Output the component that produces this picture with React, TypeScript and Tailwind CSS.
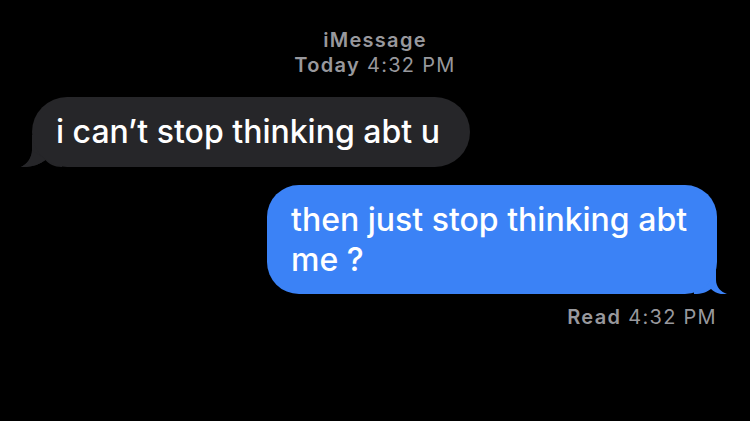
import React from "react";

export default function App() {
  const font = { fontFamily: "Inter, 'Noto Sans', sans-serif" };
  return (
    <div
      className="w-[750px] h-[421px] bg-black flex flex-col overflow-hidden"
      style={font}
    >
      <div className="pt-[28px] text-center text-[20px] leading-[25px] tracking-[1.3px] text-[#98989d]">
        <div className="font-semibold">iMessage</div>
        <div>
          <span className="font-semibold">Today</span> 4:32 PM
        </div>
      </div>

      <div className="mt-[19px] ml-[32px] relative w-[438px]">
        <svg
          className="absolute left-[-11px] bottom-0"
          width="41"
          height="32"
          viewBox="21 135 41 32"
        >
          <path
            d="M32 135 L32 150 C32 158 27 164 21 167 C30 167.5 39 165 45.5 160 C49 164 54 167 62 167 L62 135 Z"
            fill="#262629"
          />
        </svg>
        <div className="relative h-[70px] rounded-[35px] bg-[#262629] pl-[24px] text-white text-[32px] leading-[70px] font-medium">
          i can’t stop thinking abt u
        </div>
        <svg
          className="absolute left-[-11px] bottom-0 pointer-events-none"
          width="41"
          height="32"
          viewBox="21 135 41 32"
        >
          <path
            d="M32 150 C32 158 27 164 21 167 C30 167.5 39 165 45.5 160 C42 156 34 152 32 150 Z"
            fill="#262629"
          />
        </svg>
      </div>

      <div className="mt-[18px] mr-[33px] self-end relative w-[450px]">
        <svg
          className="absolute right-[-11px] bottom-0"
          width="34"
          height="34"
          viewBox="695 260 34 34"
        >
          <path
            d="M717 260 L717 280 C717 287 722 292 728 294 C722 295 716 293 712 289 C708 292 703 294 695 294 L695 260 Z"
            fill="#3b82f6"
          />
        </svg>
        <div className="relative h-[109px] rounded-[32px] bg-[#3b82f6] pl-[24px] pt-[15px] text-white text-[32px] leading-[40px] font-medium">
          then just stop thinking abt
          <br />
          me ?
        </div>
      </div>

      <div className="mt-[11px] mr-[33px] text-right text-[20px] leading-[25px] tracking-[1.3px] text-[#98989d]">
        <span className="font-semibold">Read</span> 4:32 PM
      </div>
    </div>
  );
}
